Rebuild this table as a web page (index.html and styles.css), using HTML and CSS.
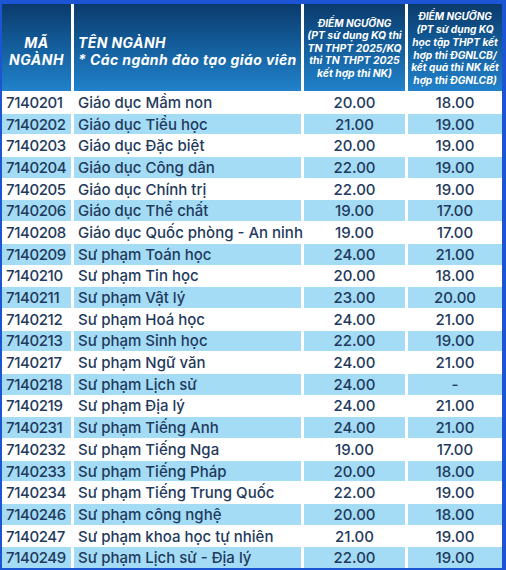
FILE: index.html
```html
<!DOCTYPE html>
<html lang="vi">
<head>
<meta charset="utf-8">
<link rel="stylesheet" href="styles.css">
</head>
<body>
<div class="frame">
  <div class="grid">
    <div class="hd hd-code"><p class="hd-text">MÃ<br>NGÀNH</p></div>
    <div class="hd hd-name"><p class="hd-text">TÊN NGÀNH<br>* Các ngành đào tạo giáo viên</p></div>
    <div class="hd hd-score"><p class="hd-text"><span class="ttl">ĐIỂM NGƯỠNG</span><br>(PT sử dụng KQ thi<br>TN THPT 2025/KQ<br>thi TN THPT 2025<br>kết hợp thi NK)</p></div>
    <div class="hd hd-score hd-score2"><p class="hd-text"><span class="ttl">ĐIỂM NGƯỠNG</span><br>(PT sử dụng KQ<br>học tập THPT kết<br>hợp thi ĐGNLCB/<br>kết quả thi NK kết<br>hợp thi ĐGNLCB)</p></div>

    <div class="row"><div class="c code">7140201</div><div class="c name">Giáo dục Mầm non</div><div class="c num">20.00</div><div class="c num">18.00</div></div>
    <div class="row alt"><div class="c code">7140202</div><div class="c name">Giáo dục Tiểu học</div><div class="c num">21.00</div><div class="c num">19.00</div></div>
    <div class="row"><div class="c code">7140203</div><div class="c name">Giáo dục Đặc biệt</div><div class="c num">20.00</div><div class="c num">19.00</div></div>
    <div class="row alt"><div class="c code">7140204</div><div class="c name">Giáo dục Công dân</div><div class="c num">22.00</div><div class="c num">19.00</div></div>
    <div class="row"><div class="c code">7140205</div><div class="c name">Giáo dục Chính trị</div><div class="c num">22.00</div><div class="c num">19.00</div></div>
    <div class="row alt"><div class="c code">7140206</div><div class="c name">Giáo dục Thể chất</div><div class="c num">19.00</div><div class="c num">17.00</div></div>
    <div class="row"><div class="c code">7140208</div><div class="c name">Giáo dục Quốc phòng - An ninh</div><div class="c num">19.00</div><div class="c num">17.00</div></div>
    <div class="row alt"><div class="c code">7140209</div><div class="c name">Sư phạm Toán học</div><div class="c num">24.00</div><div class="c num">21.00</div></div>
    <div class="row"><div class="c code">7140210</div><div class="c name">Sư phạm Tin học</div><div class="c num">20.00</div><div class="c num">18.00</div></div>
    <div class="row alt"><div class="c code">7140211</div><div class="c name">Sư phạm Vật lý</div><div class="c num">23.00</div><div class="c num">20.00</div></div>
    <div class="row"><div class="c code">7140212</div><div class="c name">Sư phạm Hoá học</div><div class="c num">24.00</div><div class="c num">21.00</div></div>
    <div class="row alt"><div class="c code">7140213</div><div class="c name">Sư phạm Sinh học</div><div class="c num">22.00</div><div class="c num">19.00</div></div>
    <div class="row"><div class="c code">7140217</div><div class="c name">Sư phạm Ngữ văn</div><div class="c num">24.00</div><div class="c num">21.00</div></div>
    <div class="row alt"><div class="c code">7140218</div><div class="c name">Sư phạm Lịch sử</div><div class="c num">24.00</div><div class="c num">-</div></div>
    <div class="row"><div class="c code">7140219</div><div class="c name">Sư phạm Địa lý</div><div class="c num">24.00</div><div class="c num">21.00</div></div>
    <div class="row alt"><div class="c code">7140231</div><div class="c name">Sư phạm Tiếng Anh</div><div class="c num">24.00</div><div class="c num">21.00</div></div>
    <div class="row"><div class="c code">7140232</div><div class="c name">Sư phạm Tiếng Nga</div><div class="c num">19.00</div><div class="c num">17.00</div></div>
    <div class="row alt"><div class="c code">7140233</div><div class="c name">Sư phạm Tiếng Pháp</div><div class="c num">20.00</div><div class="c num">18.00</div></div>
    <div class="row"><div class="c code">7140234</div><div class="c name">Sư phạm Tiếng Trung Quốc</div><div class="c num">22.00</div><div class="c num">19.00</div></div>
    <div class="row alt"><div class="c code">7140246</div><div class="c name">Sư phạm công nghệ</div><div class="c num">20.00</div><div class="c num">18.00</div></div>
    <div class="row"><div class="c code">7140247</div><div class="c name">Sư phạm khoa học tự nhiên</div><div class="c num">21.00</div><div class="c num">19.00</div></div>
    <div class="row alt"><div class="c code">7140249</div><div class="c name">Sư phạm Lịch sử - Địa lý</div><div class="c num">22.00</div><div class="c num">19.00</div></div>
  </div>
</div>
</body>
</html>
```

FILE: styles.css
```css
html, body {
  margin: 0;
  padding: 0;
}
body {
  width: 506px;
  height: 570px;
  overflow: hidden;
  background: #1c55d4;
  font-family: Inter, "Noto Sans", "Liberation Sans", sans-serif;
}
.frame {
  padding: 4px 4px 2px 2px;
}
.grid {
  display: grid;
  grid-template-columns: 69px 227px 101px 94px;
  grid-template-rows: 87px;
  grid-auto-rows: 20.7px;
  column-gap: 3px;
  row-gap: 1px;
  background: #ffffff;
  width: 500px;
  box-sizing: border-box;
}
.row {
  display: contents;
}
.hd {
  background: linear-gradient(180deg, #0b3b6c 0%, #135b98 45%, #2182cb 100%);
  color: #ffffff;
  font-weight: 700;
  font-style: italic;
  display: flex;
  flex-direction: column;
  justify-content: center;
}
.hd-text {
  margin: 0;
}
.hd-code {
  text-align: center;
  font-size: 14px;
  line-height: 17px;
  letter-spacing: 0.5px;
  padding-top: 6px;
  white-space: nowrap;
}
.hd-name {
  font-size: 14px;
  line-height: 17px;
  letter-spacing: 0.4px;
  padding-left: 4px;
  padding-top: 6px;
  white-space: nowrap;
}
.hd-score {
  text-align: center;
  font-size: 10.4px;
  line-height: 12.6px;
  padding-top: 2px;
  white-space: nowrap;
}
.hd-score .ttl {
  font-size: 10px;
}
.hd-score2 {
  font-size: 10.2px;
  line-height: 12.9px;
  padding-top: 2px;
}
.c {
  color: #1f3a5c;
  font-size: 15px;
  font-weight: 500;
  display: flex;
  align-items: center;
  white-space: nowrap;
  background: #ffffff;
}
.alt .c {
  background: #a4dbf5;
}
.code {
  padding-left: 4px;
  letter-spacing: -0.4px;
}
.name {
  padding-left: 4px;
}
.num {
  justify-content: center;
}
```
